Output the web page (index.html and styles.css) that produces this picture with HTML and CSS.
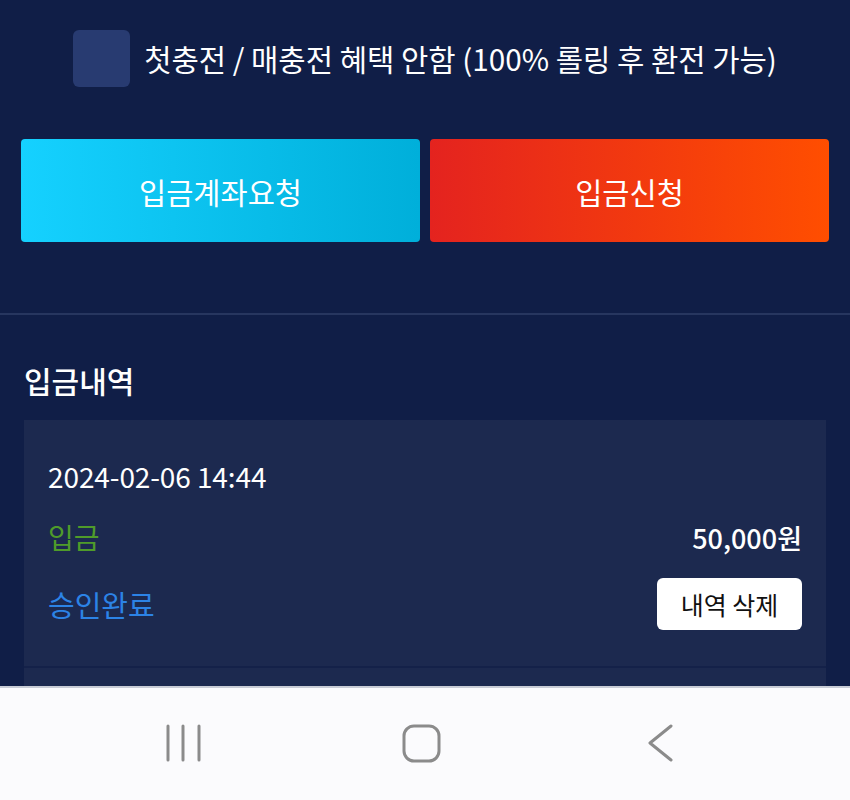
FILE: index.html
```html
<html>
<head>
   <meta charset="utf-8">
   <link rel="stylesheet" href="styles.css">
</head>
<body>
<div id='screen'>
<div id='content'>

<div class='bonus-row'>
<span class='check'></span>
<span class='bonus-text'>첫충전 / 매충전 혜택 안함 (100% 롤링 후 환전 가능)</span>
</div>

<div class='actions'>
<button class='big-btn btn-account'>입금계좌요청</button>
<button class='big-btn btn-apply'>입금신청</button>
</div>

<div class='divider'></div>

<div class='history'>
<div class='history-title'>입금내역</div>

<div class='card'>
<div class='card-date'>2024-02-06 14:44</div>
<div class='card-row card-amount'>
<span class='kind'>입금</span>
<span class='money'>50,000원</span>
</div>
<div class='card-row card-status'>
<span class='state'>승인완료</span>
<button class='del-btn'>내역 삭제</button>
</div>
</div>

<div class='card card-next'></div>
</div>

</div>

<div id='navbar'>
<div class='nav-item'>
<svg width="40" height="40" viewBox="0 0 40 40">
<path d="M5 2 V36 M20 2 V36 M36 2 V36" stroke="#8b8b8b" stroke-width="3" stroke-linecap="round" fill="none"/>
</svg>
</div>
<div class='nav-item'>
<svg width="40" height="40" viewBox="0 0 40 40">
<rect x="2" y="2" width="35" height="35" rx="10" stroke="#8b8b8b" stroke-width="3" fill="none"/>
</svg>
</div>
<div class='nav-item'>
<svg width="40" height="40" viewBox="0 0 40 40">
<path d="M30 2 L9 19 L30 36" stroke="#8b8b8b" stroke-width="3" stroke-linecap="round" stroke-linejoin="round" fill="none"/>
</svg>
</div>
</div>
</div>
</body>
</html>
```

FILE: styles.css
```css
  * {
     box-sizing: border-box;
  }
  body {
     margin: 0;
     background: #101e47;
     font-family: "Noto Sans CJK KR", "Noto Sans", sans-serif;
     color: #fff;
  }
  #screen {
     width: 850px;
     height: 800px;
     display: flex;
     flex-direction: column;
     overflow: hidden;
  }
  #content {
     flex: 1;
     overflow: hidden;
  }

  .bonus-row {
     display: flex;
     align-items: center;
     justify-content: center;
     gap: 14px;
     padding-top: 30px;
     height: 87px;
  }
  .check {
     width: 57px;
     height: 57px;
     border-radius: 6px;
     background: #283b71;
  }
  .bonus-text {
     font-size: 29.7px;
     line-height: 40px;
  }

  .actions {
     display: flex;
     gap: 10px;
     padding: 0 21px;
     margin-top: 52px;
  }
  .big-btn {
     flex: 1;
     height: 103px;
     border: none;
     border-radius: 4px;
     color: #fff;
     font-family: "Noto Sans CJK KR", sans-serif;
     font-size: 29.5px;
     padding: 0;
  }
  .btn-account {
     background: linear-gradient(to right, #15d1ff, #00afda);
  }
  .btn-apply {
     background: linear-gradient(to right, #e4231f, #ff4e00);
  }

  .divider {
     margin-top: 71px;
     height: 2px;
     background: #27365f;
  }

  .history {
     padding: 0 24px;
  }
  .history-title {
     margin-top: 45px;
     font-size: 30px;
     font-weight: 500;
     line-height: 40px;
  }
  .card {
     margin-top: 20px;
     background: #1c294f;
     padding: 36px 24px 36px 24px;
     border-bottom: 2px solid #142149;
  }
  .card-next {
     margin-top: 0;
     height: 60px;
     border-bottom: none;
  }
  .card-date {
     font-size: 28px;
     line-height: 40px;
     letter-spacing: -0.1px;
  }
  .card-row {
     display: flex;
     justify-content: space-between;
     align-items: center;
  }
  .card-amount {
     margin-top: 21px;
     height: 40px;
  }
  .card-status {
     margin-top: 21px;
     height: 52px;
  }
  .kind {
     color: #4f9b2a;
     font-size: 28px;
  }
  .money {
     font-size: 27px;
     font-weight: 500;
  }
  .state {
     color: #2c83e6;
     font-size: 29px;
  }
  .del-btn {
     width: 145px;
     height: 52px;
     border: none;
     border-radius: 6px;
     background: #fff;
     color: #111;
     font-family: "Noto Sans CJK KR", sans-serif;
     font-size: 25px;
     padding: 0;
  }

  #navbar {
     height: 114px;
     background: #fbfbfd;
     border-top: 2px solid #c8ccd6;
     display: grid;
     grid-template-columns: 1fr 1fr 1fr;
     align-items: center;
     padding: 0 70px 0 64px;
  }
  .nav-item {
     display: flex;
     justify-content: center;
  }
  .nav-item svg {
     display: block;
  }
```
